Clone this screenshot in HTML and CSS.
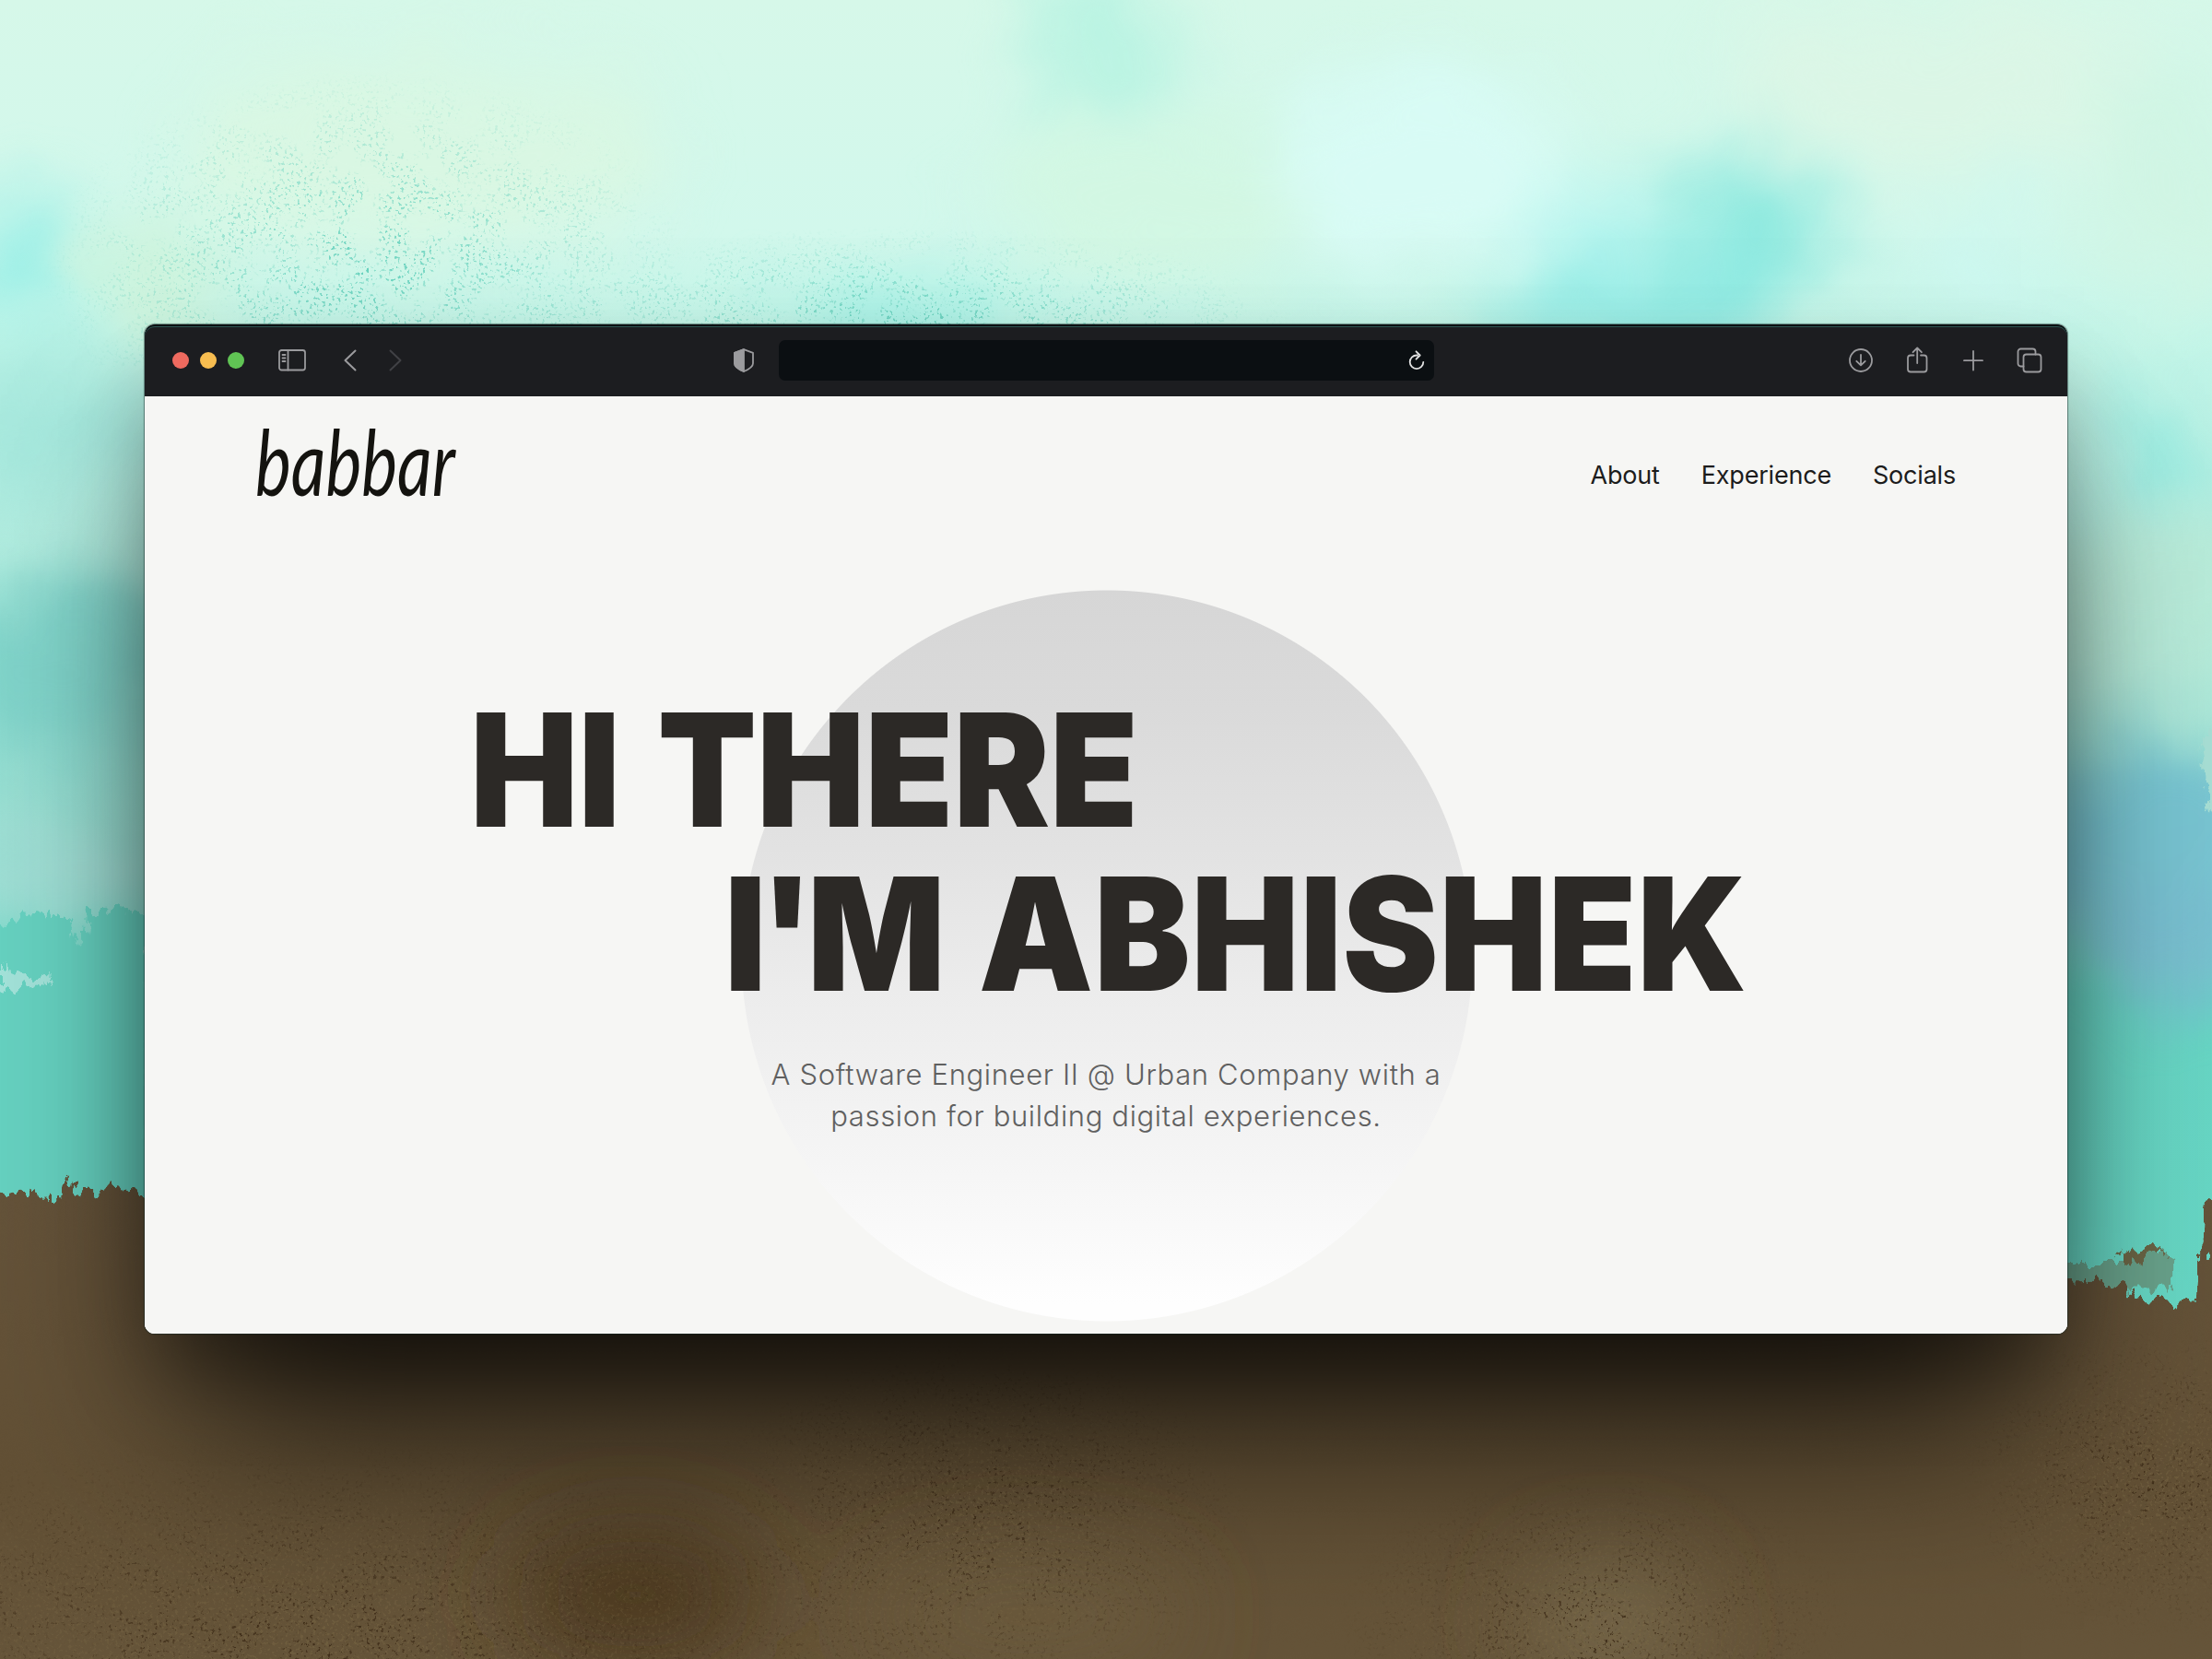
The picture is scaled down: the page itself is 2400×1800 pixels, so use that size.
FILE: index.html
```html
<!DOCTYPE html>
<html lang="en">
<head>
<meta charset="utf-8">
<title>babbar</title>
<link rel="stylesheet" href="styles.css">
</head>
<body>
<svg class="wallpaper" viewBox="0 0 1568 1176" preserveAspectRatio="none" aria-hidden="true">
  <defs>
    <linearGradient id="sky" x1="0" y1="0" x2="0" y2="1">
      <stop offset="0" stop-color="#d6f8e9"/><stop offset=".14" stop-color="#d2f8ec"/>
      <stop offset=".2" stop-color="#c4f6e9"/><stop offset=".34" stop-color="#b0ecdf"/>
      <stop offset=".5" stop-color="#96dfd2"/><stop offset=".6" stop-color="#68d6c5"/><stop offset="1" stop-color="#66d9c4"/>
    </linearGradient>
    <linearGradient id="ground" x1="0" y1="0" x2="0" y2="1">
      <stop offset="0" stop-color="#65533a"/><stop offset=".6" stop-color="#625035"/><stop offset="1" stop-color="#66553a"/>
    </linearGradient>
    <radialGradient id="spot"><stop offset="0" stop-color="#fff"/><stop offset=".4" stop-color="#fff" stop-opacity=".6"/><stop offset="1" stop-color="#fff" stop-opacity="0"/></radialGradient>
    <filter id="soft" x="-10%" y="-10%" width="120%" height="120%" color-interpolation-filters="sRGB">
      <feTurbulence type="fractalNoise" baseFrequency=".01" numOctaves="3" seed="4" result="n"/>
      <feGaussianBlur in="SourceGraphic" stdDeviation="24" result="b"/>
      <feDisplacementMap in="b" in2="n" scale="60" xChannelSelector="R" yChannelSelector="G"/>
    </filter>
    <filter id="groundSoft" x="-10%" y="-50%" width="120%" height="200%"><feGaussianBlur stdDeviation="32"/></filter>
    <filter id="rough" x="-5%" y="-10%" width="110%" height="120%" color-interpolation-filters="sRGB">
      <feTurbulence type="fractalNoise" baseFrequency=".14 .06" numOctaves="4" seed="9"/>
      <feDisplacementMap in="SourceGraphic" scale="18" xChannelSelector="R" yChannelSelector="G"/>
    </filter>
    <filter id="tealDots" x="0" y="0" width="100%" height="100%" color-interpolation-filters="sRGB">
      <feTurbulence type="fractalNoise" baseFrequency=".45" numOctaves="2" seed="3"/>
      <feColorMatrix values="0 0 0 0 .4  0 0 0 0 .82  0 0 0 0 .74  9 0 0 0 -5.300" result="d"/>
      <feTurbulence type="fractalNoise" baseFrequency=".04" numOctaves="3" seed="6"/>
      <feColorMatrix values="0 0 0 0 1  0 0 0 0 1  0 0 0 0 1  5 0 0 0 -1.800" result="m"/>
      <feComposite in="d" in2="m" operator="in"/>
    </filter>
    <filter id="brownDots" x="0" y="0" width="100%" height="100%" color-interpolation-filters="sRGB">
      <feTurbulence type="fractalNoise" baseFrequency=".4" numOctaves="3" seed="8"/>
      <feColorMatrix values="0 0 0 0 .25  0 0 0 0 .18  0 0 0 0 .1  8 0 0 0 -4.900" result="d"/>
      <feTurbulence type="fractalNoise" baseFrequency=".04" numOctaves="3" seed="5"/>
      <feColorMatrix values="0 0 0 0 1  0 0 0 0 1  0 0 0 0 1  5 0 0 0 -1.800" result="m"/>
      <feComposite in="d" in2="m" operator="in"/>
    </filter>
    <filter id="lightDots" x="0" y="0" width="100%" height="100%" color-interpolation-filters="sRGB">
      <feTurbulence type="fractalNoise" baseFrequency=".45" numOctaves="3" seed="21"/>
      <feColorMatrix values="0 0 0 0 .5  0 0 0 0 .43  0 0 0 0 .29  8 0 0 0 -4.500"/>
    </filter>
    <mask id="tealMask">
      <ellipse cx="260" cy="190" rx="230" ry="140" fill="url(#spot)"/>
      <ellipse cx="640" cy="230" rx="280" ry="70" fill="url(#spot)"/>
    </mask>
    <mask id="groundMask">
      <ellipse cx="220" cy="1160" rx="450" ry="140" fill="url(#spot)"/>
      <ellipse cx="690" cy="1080" rx="200" ry="130" fill="url(#spot)"/>
      <ellipse cx="1530" cy="1050" rx="140" ry="110" fill="url(#spot)"/>
      <ellipse cx="1130" cy="1150" rx="180" ry="110" fill="url(#spot)"/>
    </mask>
  </defs>
  <rect width="1568" height="1176" fill="url(#sky)"/>
  <g filter="url(#soft)">
    <ellipse cx="300" cy="110" rx="170" ry="70" fill="#d9f7e3"/>
    <ellipse cx="110" cy="200" rx="50" ry="45" fill="#cdf3dc"/>
    <ellipse cx="15" cy="190" rx="32" ry="50" fill="#96eee6"/>
    <ellipse cx="780" cy="30" rx="50" ry="50" fill="#b9f3e2"/>
    <ellipse cx="830" cy="140" rx="130" ry="60" fill="#d2f7e3"/>
    <ellipse cx="640" cy="230" rx="90" ry="20" fill="#9df0e6"/>
    <ellipse cx="1010" cy="120" rx="100" ry="70" fill="#d8fbf5"/>
    <ellipse cx="1240" cy="165" rx="50" ry="60" fill="#8fe9df"/>
    <ellipse cx="1160" cy="222" rx="110" ry="26" fill="#8aeae4"/>
    <ellipse cx="1130" cy="170" rx="50" ry="35" fill="#b8f5ef"/>
    <ellipse cx="1370" cy="60" rx="150" ry="60" fill="#dbf6e6"/>
    <ellipse cx="1400" cy="190" rx="60" ry="35" fill="#cdf8f0"/>
    <ellipse cx="1540" cy="140" rx="60" ry="80" fill="#d0f5e4"/>
    <ellipse cx="1530" cy="310" rx="30" ry="25" fill="#86e8df"/>
    <ellipse cx="40" cy="310" rx="80" ry="45" fill="#a4e7dc"/>
    <ellipse cx="35" cy="480" rx="90" ry="60" fill="#80d4ca"/>
    <ellipse cx="40" cy="620" rx="90" ry="35" fill="#a3dfd6"/>
    <ellipse cx="1530" cy="430" rx="100" ry="70" fill="#b8ebd9"/>
    <ellipse cx="1520" cy="600" rx="110" ry="72" fill="#78c5d2"/>
    <ellipse cx="1540" cy="670" rx="60" ry="35" fill="#79bdd0"/>
  </g>
  <g filter="url(#rough)">
    <path d="M-20 664 28 646 50 652 53 670 60 670 62 647 104 646 104 860-20 860Z" fill="#66d2c1"/>
    <path d="M0 685 12 690 36 693 34 698 0 702Z" fill="#a3e3da"/>
    <path d="M104 647 128 664 118 680 104 676Z" fill="#9edcd2"/>
    <path d="M1560 520h30v60h-24Z" fill="#a7dfd5"/>
    <path d="M1460 895h45l10-8 25 2v24h-80Z" fill="#69a28b"/>
    <path d="M-20 850 0 847 12 846 18 842 22 848 46 849 50 834 54 848 68 846 75 835 80 844 95 846 130 850 700 890 1440 910 1485 908 1505 912 1520 921 1558 925 1561 855 1568 850 1590 855 1590 1200-20 1200Z" fill="url(#ground)"/>
    <path d="M1502 890 1532 883 1532 890 1508 896Z" fill="#6b6546"/>
  </g>
  <g filter="url(#groundSoft)">
    <ellipse cx="450" cy="1130" rx="90" ry="50" fill="#4d3a20"/>
    <ellipse cx="730" cy="1145" rx="110" ry="40" fill="#6b5a3d"/>
    <ellipse cx="1140" cy="1150" rx="60" ry="45" fill="#75664a"/>
  </g>
  <rect width="1568" height="260" fill="#fff" filter="url(#tealDots)" mask="url(#tealMask)"/>
  <rect y="945" width="1568" height="231" fill="#fff" filter="url(#brownDots)" mask="url(#groundMask)"/>
  <rect y="945" width="1568" height="231" fill="#fff" filter="url(#lightDots)" mask="url(#groundMask)" opacity=".4"/>
</svg>

<div class="window">
  <header class="toolbar">
    <div class="toolbar-left">
      <div class="lights"><span class="light red"></span><span class="light yellow"></span><span class="light green"></span></div>
      <svg class="icon sidebar" viewBox="0 0 30 24"><rect x="1" y="1" width="28" height="21.5" rx="2.5"/><path d="M10.500 1v21.500M4.500 6h3M4.500 9.500h3M4.500 13h3"/></svg>
      <svg class="icon chevron" viewBox="0 0 14 24"><path d="M12.500 1.500 1.500 12l11 10.500"/></svg>
      <svg class="icon chevron dim" viewBox="0 0 14 24"><path d="M1.500 1.500 12.500 12l-11 10.500"/></svg>
    </div>
    <div class="toolbar-center">
      <svg class="icon shield" viewBox="0 0 22 26"><path d="M11 1.200 21 4.800v11.500c0 3.500-5 6.700-10 8.700-5-2-10-5.200-10-8.700V4.800Z"/><path class="solid" d="M11 1.200v23.800c-5-2-10-5.200-10-8.700V4.800Z"/></svg>
      <div class="address">
        <svg class="icon reload" viewBox="0 0 18 22"><path d="M10 5.500H9a7.300 7.300 0 1 0 7.300 7.300M8.500 1.300l4.200 4.200-4.200 4.200"/></svg>
      </div>
    </div>
    <div class="toolbar-right">
      <svg class="icon" viewBox="0 0 28 30"><circle cx="14" cy="15" r="12"/><path d="M14 9v11M9.300 15.800 14 20.300l4.700-4.500"/></svg>
      <svg class="icon" viewBox="0 0 28 30"><path d="M10.500 9.500H7a3 3 0 0 0-3 3v12a3 3 0 0 0 3 3h14.500a3 3 0 0 0 3-3v-12a3 3 0 0 0-3-3H18M14.200 18V1.500M9.500 6.200l4.700-4.700 4.700 4.700"/></svg>
      <svg class="icon" viewBox="0 0 28 30"><path d="M14 5v20.500M4 15.200h20"/></svg>
      <svg class="icon" viewBox="0 0 28 30"><rect x="7.500" y="8.500" width="19" height="19" rx="3"/><path d="M7.500 21.500H4.500a3 3 0 0 1-3-3v-13a3 3 0 0 1 3-3h13a3 3 0 0 1 3 3v3"/></svg>
    </div>
  </header>
  <main class="page">
    <nav class="site-nav">
      <a class="logo">babbar</a>
      <div class="links"><a>About</a><a>Experience</a><a>Socials</a></div>
    </nav>
    <section class="hero">
      <h1 class="title"><span class="line first">HI THERE</span><span class="line second"><span class="tight">I'M</span> ABHISHEK</span></h1>
      <p class="intro">A Software Engineer II @ Urban Company with a<br>passion for building digital experiences.</p>
    </section>
  </main>
</div>
</body>
</html>
```
FILE: styles.css
```css
* { box-sizing: border-box; }

body {
  margin: 0;
  width: 2400px;
  height: 1800px;
  overflow: hidden;
  display: flex;
  justify-content: center;
  align-items: flex-start;
  padding-top: 352px;
  position: relative;
  font-family: Inter, "Liberation Sans", sans-serif;
}

.wallpaper {
  position: absolute;
  inset: 0;
  width: 100%;
  height: 100%;
}

.window {
  position: relative;
  width: 2086px;
  height: 1095px;
  border-radius: 11px;
  overflow: hidden;
  background: #f6f6f4;
  box-shadow: 0 0 1px 1px rgba(20, 40, 38, .5), 0 140px 190px -50px rgba(0, 0, 0, .75), 0 50px 90px -15px rgba(0, 0, 0, .4);
}

.toolbar {
  display: flex;
  align-items: center;
  height: 78px;
  padding: 0 27px 1px 30px;
  background: #1c1d20;
  border-radius: 11px 11px 0 0;
  box-shadow: inset 0 2px 0 #0b1012, inset 0 3px 0 #2e5451;
}

.icon {
  display: block;
  flex: none;
  width: 28px;
  height: 30px;
  fill: none;
  stroke: #9b9b9e;
  stroke-width: 1.8;
  stroke-linecap: round;
  stroke-linejoin: round;
}

.toolbar-left { display: flex; align-items: center; width: 609px; }
.lights { display: flex; gap: 12px; }
.light { width: 18px; height: 18px; border-radius: 50%; }
.red { background: #ee6a5f; }
.yellow { background: #f7bd50; }
.green { background: #60c454; }
.sidebar { width: 30px; height: 24px; margin-left: 37px; }
.chevron { width: 14px; height: 24px; margin-left: 41px; stroke-width: 2; }
.dim { margin-left: 35px; stroke: #404145; }

.toolbar-center { display: flex; align-items: center; gap: 27px; }
.shield { width: 22px; height: 26px; }
.shield .solid { fill: #9b9b9e; }
.address {
  display: flex;
  align-items: center;
  justify-content: flex-end;
  width: 711px;
  height: 44px;
  padding-right: 10px;
  border-radius: 7px;
  background: #0b0f12;
}
.reload { width: 18px; height: 22px; stroke: #e2e2e2; }
.toolbar-right { display: flex; gap: 33px; margin-left: auto; }

.page {
  display: flow-root;
  height: 1017px;
  background: radial-gradient(circle 397px at 1044px 607px, transparent 396px, #f6f6f4 397px), linear-gradient(#d6d6d6 210px, #dadada 340px, #e2e2e2 490px, #ececec 645px, #f5f5f5 830px, #fefefe 985px);
}

.site-nav {
  display: flex;
  justify-content: space-between;
  align-items: center;
  height: 171px;
  padding: 0 121px 0 120px;
}
.logo {
  margin-top: -34px;
  font-family: Lato, "Liberation Sans", sans-serif;
  font-style: italic;
  font-weight: 400;
  font-size: 100px;
  line-height: 110px;
  color: #14130f;
  transform: scaleX(.735);
  transform-origin: left;
}
.links { display: flex; gap: 45px; font-size: 27px; font-weight: 400; letter-spacing: -.2px; line-height: 32px; color: #1c1c1c; }

.title {
  margin: 145px 0 0;
  font-size: 171px;
  font-weight: 900;
  line-height: 178px;
  color: #2c2926;
}
.line { display: block; width: max-content; white-space: nowrap; transform: scaleX(.916); transform-origin: left; }
.first { margin-left: 353px; word-spacing: 10px; }
.second { margin-left: 629px; word-spacing: 12px; letter-spacing: .7px; }
.tight { display: inline-block; letter-spacing: -7.5px; }

.intro {
  margin: 42px 0 0;
  text-align: center;
  font-size: 31px;
  font-weight: 300;
  line-height: 44.5px;
  letter-spacing: .64px;
  color: #606060;
}
```
